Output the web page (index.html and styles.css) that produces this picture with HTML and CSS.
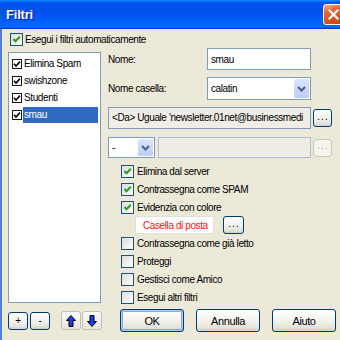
FILE: index.html
```html
<!DOCTYPE html>
<html lang="it">
<head>
  <meta charset="UTF-8">
  <title>Filtri</title>
  <link rel="stylesheet" href="styles.css">
</head>
<body>
  <div class="window">
    <div class="titlebar">
      <span class="title">Filtri</span>
      <span class="close">
        <svg width="11" height="11" viewBox="0 0 11 11"><path d="M1.5 1.5 L9.5 9.5 M9.5 1.5 L1.5 9.5" stroke="#fff" stroke-width="2.2" stroke-linecap="square"/></svg>
      </span>
    </div>

    <div class="content">
      <label class="check auto">
        <span class="box"><svg viewBox="0 0 11 11"><path d="M2.5 5 L4.5 7.2 L8.8 2.8" stroke="#21a121" stroke-width="2" fill="none"/></svg></span>
        Esegui i filtri automaticamente
      </label>

      <div class="main">
        <ul class="filter-list">
          <li><span class="mini-box"><svg viewBox="0 0 8 8"><path d="M1 3.8 L3 6 L7 1.6" stroke="#000" stroke-width="1.6" fill="none"/></svg></span><span class="name">Elimina Spam</span></li>
          <li><span class="mini-box"><svg viewBox="0 0 8 8"><path d="M1 3.8 L3 6 L7 1.6" stroke="#000" stroke-width="1.6" fill="none"/></svg></span><span class="name">swishzone</span></li>
          <li><span class="mini-box"><svg viewBox="0 0 8 8"><path d="M1 3.8 L3 6 L7 1.6" stroke="#000" stroke-width="1.6" fill="none"/></svg></span><span class="name">Studenti</span></li>
          <li class="selected"><span class="mini-box"><svg viewBox="0 0 8 8"><path d="M1 3.8 L3 6 L7 1.6" stroke="#000" stroke-width="1.6" fill="none"/></svg></span><span class="name">smau</span></li>
        </ul>

        <div class="editor">
          <div class="field-row">
            <span class="label">Nome:</span>
            <div class="textbox">smau</div>
          </div>
          <div class="field-row combo-row">
            <span class="label">Nome casella:</span>
            <div class="combo">calatin<span class="drop"><svg width="9" height="6" viewBox="0 0 9 6"><path d="M1 1 L4.5 4.5 L8 1" stroke="#4d6185" stroke-width="2" fill="none"/></svg></span></div>
          </div>
          <div class="cond-row">
            <div class="cond"><span class="cond-text">&lt;Da&gt; Uguale 'newsletter.01net@businessmedi</span></div>
            <button class="btn dots">...</button>
          </div>
          <div class="cond-row second">
            <div class="combo small">-<span class="drop"><svg width="9" height="6" viewBox="0 0 9 6"><path d="M1 1 L4.5 4.5 L8 1" stroke="#4d6185" stroke-width="2" fill="none"/></svg></span></div>
            <div class="cond disabled"></div>
            <button class="btn dots" disabled>...</button>
          </div>

          <div class="actions">
            <label class="check">
              <span class="box"><svg viewBox="0 0 11 11"><path d="M2.5 5 L4.5 7.2 L8.8 2.8" stroke="#21a121" stroke-width="2" fill="none"/></svg></span>
              Elimina dal server
            </label>
            <label class="check">
              <span class="box"><svg viewBox="0 0 11 11"><path d="M2.5 5 L4.5 7.2 L8.8 2.8" stroke="#21a121" stroke-width="2" fill="none"/></svg></span>
              Contrassegna come SPAM
            </label>
            <label class="check">
              <span class="box"><svg viewBox="0 0 11 11"><path d="M2.5 5 L4.5 7.2 L8.8 2.8" stroke="#21a121" stroke-width="2" fill="none"/></svg></span>
              Evidenzia con colore
            </label>
            <div class="color-row">
              <div class="color-box">Casella di posta</div>
              <button class="btn dots">...</button>
            </div>
            <label class="check"><span class="box"></span>Contrassegna come già letto</label>
            <label class="check"><span class="box"></span>Proteggi</label>
            <label class="check"><span class="box"></span>Gestisci come Amico</label>
            <label class="check"><span class="box"></span>Esegui altri filtri</label>
          </div>
        </div>
      </div>

      <div class="footer">
        <button class="btn tiny">+</button>
        <button class="btn tiny">-</button>
        <button class="btn arrow up">
          <svg width="10" height="12" viewBox="0 0 10 12"><path d="M5 0.5 L9.5 5.5 L7 5.5 L7 11.5 L3 11.5 L3 5.5 L0.5 5.5 Z" fill="#1a3cf0" stroke="#000" stroke-width="1"/></svg>
        </button>
        <button class="btn arrow">
          <svg width="10" height="12" viewBox="0 0 10 12"><path d="M5 11.5 L9.5 6.5 L7 6.5 L7 0.5 L3 0.5 L3 6.5 L0.5 6.5 Z" fill="#1a3cf0" stroke="#000" stroke-width="1"/></svg>
        </button>
        <button class="btn big default">OK</button>
        <button class="btn big">Annulla</button>
        <button class="btn big">Aiuto</button>
      </div>
    </div>
  </div>
</body>
</html>
```

FILE: styles.css
```css
html, body {
    margin: 0;
    width: 340px;
    height: 340px;
    overflow: hidden;
}
body {
    font-family: "Liberation Sans", Arial, sans-serif;
    font-size: 10px;
    letter-spacing: -0.4px;
    color: #000;
    background-color: #ece9d8;
}
.window {
    height: 340px;
    border-left: 2px solid #4a7fe0;
    background-color: #ece9d8;
}

/* title bar */
.titlebar {
    height: 29px;
    display: flex;
    align-items: center;
    justify-content: space-between;
    background: linear-gradient(180deg, #0997ff, #0053ee 8%, #0050ee 40%, #0066ff 88%, #0066ff 93%, #005bff 95%, #003dd7 96%, #003dd7);
    margin-left: -2px;
}
.title {
    color: #fff;
    font-weight: bold;
    font-size: 13px;
    letter-spacing: -0.2px;
    padding-left: 6px;
    text-shadow: 1px 1px #0f1089;
}
.close {
    width: 21px;
    height: 21px;
    box-sizing: border-box;
    margin-right: -4px;
    border: 1px solid #fff;
    border-radius: 3px;
    display: flex;
    align-items: center;
    justify-content: center;
    background: linear-gradient(160deg, #f4b49a, #e8663a 30%, #d8501f 70%, #c8420f);
}

.content {
    padding: 4px 8px 0 6px;
}

/* xp checkbox */
.check {
    display: flex;
    align-items: center;
    height: 18px;
    gap: 3px;
    white-space: nowrap;
}
.box {
    flex: none;
    width: 13px;
    height: 13px;
    box-sizing: border-box;
    border: 1px solid #1c5180;
    background: linear-gradient(135deg, #dcdcd7, #fff);
    display: flex;
}
.box svg {
    width: 11px;
    height: 11px;
}
.auto {
    height: 13px;
    margin-left: 2px;
    gap: 2px;
}

.main {
    display: flex;
    gap: 7px;
    margin-top: 2px;
}

/* filter list */
.filter-list {
    list-style: none;
    margin: 4px 0 0;
    padding: 2px 2px 0 3px;
    width: 93px;
    height: 251px;
    box-sizing: border-box;
    border: 1px solid #7f9db9;
    background-color: #fff;
}
.filter-list li {
    height: 17px;
    display: flex;
    align-items: center;
}
.mini-box {
    width: 10px;
    height: 10px;
    box-sizing: border-box;
    border: 1px solid #1a1a1a;
    background-color: #fff;
    display: flex;
    margin-right: 1px;
}
.mini-box svg {
    width: 8px;
    height: 8px;
}
.filter-list .name {
    flex: 1;
    padding-left: 1px;
    line-height: 16px;
}
.filter-list .selected .name {
    background-color: #316ac5;
    color: #fff;
}

/* editor side */
.editor {
    width: 224px;
}
.field-row {
    display: flex;
    align-items: center;
    height: 22px;
}
.field-row .label {
    width: 99px;
}
.combo-row {
    height: 23px;
    margin-top: 7px;
}
.textbox,
.combo {
    width: 104px;
    height: 100%;
    box-sizing: border-box;
    border: 1px solid #7f9db9;
    background-color: #fff;
    padding-left: 3px;
    display: flex;
    align-items: center;
    position: relative;
}
.drop {
    position: absolute;
    right: 1px;
    top: 1px;
    bottom: 1px;
    width: 15px;
    border-radius: 2px;
    background: linear-gradient(180deg, #dbe6fd, #b9cdf9);
    display: flex;
    align-items: center;
    justify-content: center;
}

.cond-row {
    display: flex;
    align-items: center;
    height: 22px;
    margin-top: 7px;
}
.cond-row.second {
    height: 21px;
    margin-top: 8px;
}
.cond {
    flex: none;
    width: 203px;
    height: 100%;
    box-sizing: border-box;
    border: 1px solid #7f9db9;
    background-color: #efede5;
    padding-left: 3px;
    line-height: 20px;
    white-space: nowrap;
    overflow: hidden;
}
.combo.small {
    width: 47px;
}
.cond.disabled {
    width: 153px;
    margin-left: 3px;
    border-color: #aebdd0;
}

/* xp buttons */
.btn {
    flex: none;
    font-family: inherit;
    font-size: 10px;
    letter-spacing: inherit;
    color: #000;
    box-sizing: border-box;
    border: 1px solid #003c74;
    border-radius: 3px;
    background: linear-gradient(180deg, #fff, #f0f0ea 60%, #e3e1d8 85%, #d6d0c5);
    padding: 0;
    display: flex;
    align-items: center;
    justify-content: center;
}
.btn[disabled] {
    border-color: #c9c7ba;
    background: #f5f4ea;
    color: #aca899;
}
.dots {
    width: 19px;
    height: 18px;
    margin-left: 2px;
    line-height: 1;
    padding-bottom: 3px;
    letter-spacing: 1px;
    padding-left: 1px;
}

.actions {
    margin-top: 4px;
    padding-left: 13px;
}
.color-row {
    display: flex;
    align-items: center;
    height: 18px;
    padding-left: 14px;
}
.color-box {
    width: 79px;
    height: 18px;
    box-sizing: border-box;
    border: 1px solid #e2e0d6;
    background-color: #fff;
    color: #ff1010;
    padding-left: 7px;
    line-height: 17px;
    white-space: nowrap;
}
.color-row .dots {
    width: 21px;
    margin-left: 9px;
}

/* footer buttons */
.footer {
    display: flex;
    align-items: center;
    margin-top: 3px;
}
.tiny {
    width: 20px;
    height: 18px;
    margin-right: 2px;
}
.arrow {
    width: 20px;
    height: 19px;
    border-color: #c3c0b2;
    background: linear-gradient(180deg, #fbfbf8, #e9e6da);
}
.arrow.up {
    margin-left: 9px;
    margin-right: 1px;
}
.big {
    width: 64px;
    height: 23px;
    margin-left: 12px;
    font-size: 11px;
}
.big.default {
    margin-left: 18px;
    box-shadow: inset 0 0 0 1px #b3cbf4, inset 0 0 0 2px #88aaed;
}
```
